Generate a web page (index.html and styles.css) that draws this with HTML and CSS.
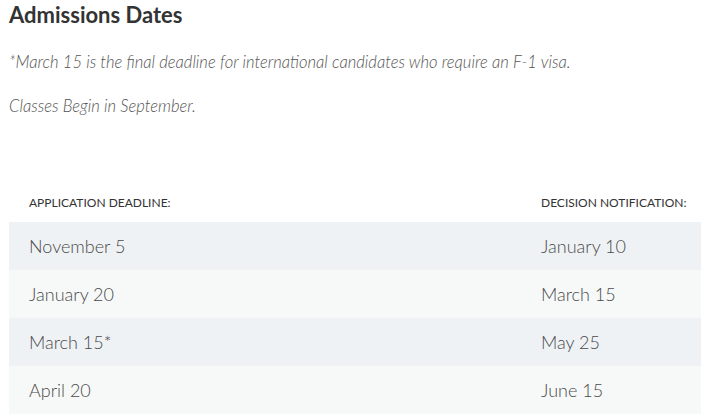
FILE: index.html
```html
<!DOCTYPE html>
<html>
<head>
<meta charset="utf-8">
<link rel="stylesheet" href="styles.css">
</head>
<body>
<div class="page">
  <h2 class="title">Admissions Dates</h2>
  <p class="note">*March 15 is the final deadline for international candidates who require an F-1 visa.</p>
  <p class="note">Classes Begin in September.</p>
  <div class="table">
    <div class="row head">
      <div class="cell">Application Deadline:</div>
      <div class="cell">Decision Notification:</div>
    </div>
    <div class="row odd">
      <div class="cell">November 5</div>
      <div class="cell">January 10</div>
    </div>
    <div class="row even">
      <div class="cell">January 20</div>
      <div class="cell">March 15</div>
    </div>
    <div class="row odd">
      <div class="cell">March 15*</div>
      <div class="cell">May 25</div>
    </div>
    <div class="row even">
      <div class="cell">April 20</div>
      <div class="cell">June 15</div>
    </div>
  </div>
</div>
</body>
</html>
```

FILE: styles.css
```css
html, body {
  margin: 0;
  padding: 0;
  background: #fff;
  overflow: hidden;
}
body {
  font-family: Lato, "Open Sans", sans-serif;
  color: #333;
}
.page {
  padding-left: 9px;
}
.title {
  margin: 0;
  padding-top: 1px;
  font-size: 22px;
  line-height: 28px;
  font-weight: 700;
  color: #333;
}
.note {
  margin: 0;
  font-family: "Lato Light", Lato, sans-serif;
  font-size: 16.6px;
  line-height: 24px;
  font-style: italic;
  font-weight: 300;
  color: #555;
}
.title + .note {
  margin-top: 21px;
}
.note + .note {
  margin-top: 20px;
}
.table {
  margin-top: 64px;
  width: 692px;
}
.row {
  display: grid;
  grid-template-columns: 512px 180px;
}
.cell {
  padding-left: 20px;
  white-space: nowrap;
}
.head {
  height: 40px;
  align-items: center;
  font-size: 12px;
  text-transform: uppercase;
  color: #333;
  font-weight: 400;
}
.odd, .even {
  height: 48px;
  align-items: center;
  font-family: "Lato Light", Lato, sans-serif;
  font-size: 18px;
  font-weight: 300;
  color: #4a4a4a;
}
.odd { background: #eff2f5; }
.even { background: #f7f9f9; }
```
